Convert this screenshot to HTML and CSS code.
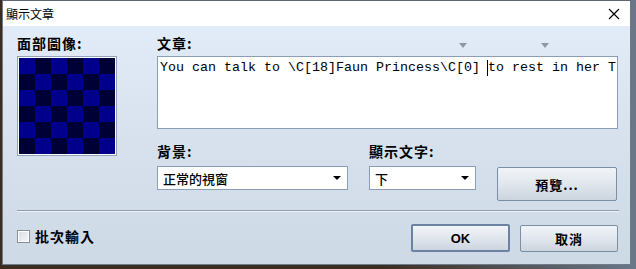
FILE: index.html
```html
<!DOCTYPE html>
<html lang="zh-Hant">
<head>
<meta charset="utf-8">
<title>顯示文章</title>
<link rel="stylesheet" href="styles.css">
</head>
<body>
<div class="dialog">
  <div class="titlebar">
    <span class="title">顯示文章</span>
    <svg class="close" width="12" height="12" viewBox="0 0 12 12"><path d="M1 1 L11 11 M11 1 L1 11" stroke="#000" stroke-width="1.2" fill="none"/></svg>
  </div>
  <div class="content">
    <div class="top">
      <div class="col-face">
        <div class="label">面部圖像:</div>
        <div class="face"><div class="checker"></div></div>
      </div>
      <div class="col-text">
        <div class="label-row">
          <div class="label">文章:</div>
          <span class="mark"></span>
          <span></span>
          <span class="mark"></span>
        </div>
        <div class="textarea">You can talk to \C[18]Faun Princess\C[0] <span class="caret"></span>to rest in her T</div>
        <div class="row2">
          <div class="group g1">
            <div class="label">背景:</div>
            <div class="select"><span>正常的視窗</span><span class="arrow"></span></div>
          </div>
          <div class="group g2">
            <div class="label">顯示文字:</div>
            <div class="select"><span>下</span><span class="arrow"></span></div>
          </div>
          <button class="btn preview">預覽...</button>
        </div>
      </div>
    </div>
    <div class="sep"></div>
    <div class="bottom">
      <label class="check"><span class="box"></span><span>批次輸入</span></label>
      <div class="buttons">
        <button class="btn ok">OK</button>
        <button class="btn cancel">取消</button>
      </div>
    </div>
  </div>
</div>
</body>
</html>
```
FILE: styles.css
```css
html, body {
  margin: 0;
  padding: 0;
}
body {
  width: 636px;
  height: 269px;
  overflow: hidden;
  background: linear-gradient(90deg, #3a2e22 0, #3a2e22 60%, #6a7788 100%);
  font-family: "Noto Sans CJK TC", "Noto Sans", sans-serif;
  color: #000;
}
.dialog {
  margin-left: 2px;
  width: 629px;
  height: 265px;
  border: 1px solid #6f7b88;
  border-top: 1px solid #5c6570;
  box-sizing: border-box;
  display: flex;
  flex-direction: column;
}
.titlebar {
  height: 25px;
  background: #fff;
  display: flex;
  align-items: center;
  justify-content: space-between;
  padding: 0 10px 0 3px;
  flex: none;
}
.title {
  font-size: 12px;
  line-height: 14px;
  color: #000;
}
.close {
  display: block;
}
.content {
  flex: 1;
  background: linear-gradient(180deg, #e1ecf8 0%, #d6e1ed 50%, #cdd9e5 100%);
  padding: 9px 12px 0 14px;
}
.top {
  display: grid;
  grid-template-columns: 100px 461px;
  column-gap: 40px;
}
.label {
  font-size: 14px;
  line-height: 16px;
  height: 21px;
  font-weight: 700;
  letter-spacing: 1px;
  white-space: nowrap;
}
.face {
  width: 100px;
  height: 100px;
  box-sizing: border-box;
  border: 1px solid #8ea3ba;
  padding: 1px;
  background: #fff;
}
.checker {
  width: 96px;
  height: 96px;
  background: repeating-conic-gradient(#000036 0 25%, #00008d 0 50%) 0 0 / 32px 32px;
}
.label-row {
  display: grid;
  grid-template-columns: 302px 8px 74px 8px;
  align-items: start;
}
.mark {
  margin-top: 8px;
  width: 0;
  height: 0;
  border-left: 4px solid transparent;
  border-right: 4px solid transparent;
  border-top: 5px solid #8c98a8;
}
.textarea {
  height: 73px;
  box-sizing: border-box;
  border: 1px solid #8a9fb6;
  background: #fff;
  padding: 3px 2px;
  font-family: "Liberation Mono", monospace;
  font-size: 13.33px;
  line-height: 16px;
  white-space: pre;
  overflow: hidden;
}
.caret {
  display: inline-block;
  width: 0;
  height: 16px;
  border-left: 1px solid #000;
  margin-left: -1px;
  vertical-align: top;
}
.row2 {
  display: flex;
  align-items: flex-start;
  margin-top: 14px;
  gap: 21px;
}
.row2 .label {
  height: 23px;
  line-height: 16px;
  font-weight: 600;
}
.g1 { width: 191px; }
.g2 { width: 107px; }
.select {
  height: 24px;
  box-sizing: border-box;
  border: 1px solid #8a9fb6;
  background: #fff;
  display: flex;
  align-items: center;
  justify-content: space-between;
  padding: 0 6px 0 5px;
  font-size: 13px;
  font-weight: 500;
}
.arrow {
  width: 0;
  height: 0;
  border-left: 4px solid transparent;
  border-right: 4px solid transparent;
  border-top: 4px solid #000;
}
.btn {
  font-family: "Noto Sans CJK TC", "Noto Sans", sans-serif;
  font-weight: 700;
  font-size: 13px;
  color: #000;
  background: linear-gradient(180deg, #f1f4f8 0%, #e2e8ef 45%, #ccd4de 100%);
  border: 1px solid #7c8ea4;
  border-radius: 2px;
  padding: 0;
  box-sizing: border-box;
}
.preview {
  width: 120px;
  height: 34px;
  margin-top: 24px;
  letter-spacing: 1px;
}
.sep {
  margin-top: 9px;
  width: 602px;
  height: 1px;
  background: #8d9cad;
  border-bottom: 1px solid #eef3f8;
}
.bottom {
  margin-top: 12px;
  display: flex;
  justify-content: space-between;
  align-items: flex-start;
  width: 601px;
}
.check {
  display: flex;
  align-items: center;
  gap: 5px;
  margin-top: 2px;
  font-size: 14px;
  font-weight: 700;
  letter-spacing: 1px;
}
.box {
  width: 13px;
  height: 13px;
  box-sizing: border-box;
  border: 1px solid #8a8f96;
  background: linear-gradient(135deg, #d8dde3, #f6f7f9);
  box-shadow: inset 0 0 0 1px #fff;
}
.buttons {
  display: flex;
  gap: 10px;
  align-items: flex-start;
}
.ok {
  width: 99px;
  height: 28px;
  border: 2px solid #6b82a3;
  font-family: "Liberation Sans", sans-serif;
}
.cancel {
  width: 98px;
  height: 27px;
  margin-top: 1px;
  letter-spacing: 1px;
}
```
